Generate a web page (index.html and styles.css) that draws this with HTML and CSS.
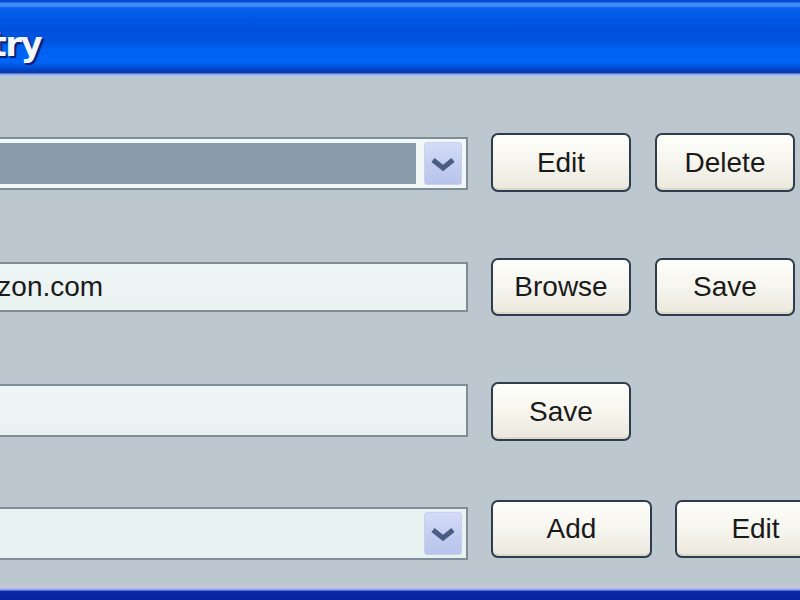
FILE: index.html
```html
<!DOCTYPE html>
<html>
<head>
<meta charset="utf-8">
<title>Entry</title>
<link rel="stylesheet" href="styles.css">
</head>
<body>
<div class="window">
  <div class="titlebar"><span class="title">Entry</span></div>
  <div class="content">
    <div class="row row1">
      <div class="combo selected-combo">
        <div class="combo-value"></div>
        <div class="drop"><svg width="26" height="16" viewBox="0 0 26 16"><polyline points="3,4 13,12 23,4" fill="none" stroke="#4a5e84" stroke-width="5" stroke-linejoin="miter"/></svg></div>
      </div>
      <button class="btn w139">Edit</button>
      <button class="btn w139">Delete</button>
    </div>
    <div class="row row2">
      <div class="field"><span class="field-text">www.amazon.com</span></div>
      <button class="btn w139">Browse</button>
      <button class="btn w139">Save</button>
    </div>
    <div class="row row3">
      <div class="field"></div>
      <button class="btn w139">Save</button>
    </div>
    <div class="row row4">
      <div class="combo">
        <div class="combo-value plain"></div>
        <div class="drop"><svg width="26" height="16" viewBox="0 0 26 16"><polyline points="3,4 13,12 23,4" fill="none" stroke="#4a5e84" stroke-width="5" stroke-linejoin="miter"/></svg></div>
      </div>
      <button class="btn w161">Add</button>
      <button class="btn w161">Edit</button>
    </div>
  </div>
  <div class="frame-bottom"></div>
</div>
</body>
</html>
```

FILE: styles.css
```css
html, body {
  margin: 0;
  padding: 0;
  width: 800px;
  height: 600px;
  overflow: hidden;
  background: #bcc7d0;
}

.window {
  margin-left: -140px;
  width: 940px;
  height: 600px;
  display: flex;
  flex-direction: column;
  background: #bcc7d0;
  font-family: "Liberation Sans", Arial, sans-serif;
}

.titlebar {
  height: 76px;
  flex: none;
  box-sizing: border-box;
  padding-left: 86px;
  padding-top: 24px;
  background: linear-gradient(to bottom,
    #0a4cd0 0px, #0a4cd0 2px,
    #3b8cf6 3px, #4090f8 6px,
    #0a60ec 8px, #0058e6 18px,
    #0052dc 30px, #0054e0 42px,
    #0062f4 50px, #0064f6 62px,
    #0052da 67px, #003cb8 71px,
    #1a3a9c 73px, #8aaef2 74px, #a8c0f0 76px);
}

.title {
  font-family: "DejaVu Sans", Verdana, sans-serif;
  font-weight: bold;
  font-size: 34px;
  line-height: 40px;
  color: #f4f6ff;
  text-shadow: 2px 2px 1px #0a1f70;
  letter-spacing: -1.5px;
}

.content {
  flex: 1;
  padding-left: 8px;
  padding-top: 57px;
  box-sizing: border-box;
}

.row {
  display: flex;
  align-items: flex-start;
}

.row1 { height: 59px; }
.row2 { height: 58px; margin-top: 66px; }
.row3 { height: 59px; margin-top: 66px; }
.row4 { height: 60px; margin-top: 59px; }

.combo, .field {
  width: 600px;
  flex: none;
  box-sizing: border-box;
  border: 2px solid #7f8d98;
  background: #eaf3f1;
  margin-right: 23px;
}

.row1 .combo { height: 53px; margin-top: 4px; }
.row2 .field { height: 50px; margin-top: 4px; }
.row3 .field { height: 53px; margin-top: 2px; }
.row4 .combo { height: 53px; margin-top: 7px; }

.combo {
  display: flex;
  align-items: stretch;
  padding: 4px 4px 4px 4px;
  background: #f0f7f6;
}

.combo-value {
  flex: 1;
  background: #8a9dab;
  margin-right: 8px;
}

.combo-value.plain {
  background: transparent;
}

.row4 .combo {
  background: #e8f2f0;
}

.drop {
  width: 36px;
  flex: none;
  border-radius: 3px;
  background: linear-gradient(to bottom, #d4dcf6, #c2ccef 60%, #b8c4ec);
  border: 1px solid #c8d0ee;
  display: flex;
  align-items: center;
  justify-content: center;
  margin: -1px 0;
}

.field {
  display: flex;
  align-items: center;
  padding-left: 6px;
  background: linear-gradient(to bottom, #eef6f6, #e8f2ef);
}

.field-text {
  font-size: 28px;
  color: #1a1a1a;
  white-space: nowrap;
}

.btn {
  flex: none;
  box-sizing: border-box;
  height: 59px;
  border: 2px solid #2e3d4c;
  border-radius: 7px;
  background: linear-gradient(to bottom, #fefefb 0%, #f6f5ee 50%, #ebe8dc 100%);
  box-shadow: inset 0 -2px 0 #dcd8c8;
  font-family: "Liberation Sans", Arial, sans-serif;
  font-size: 28px;
  color: #1a1a1a;
  padding: 0;
  margin: 0 24px 0 0;
}

.row2 .btn { height: 58px; }
.row4 .btn { height: 58px; }

.w139 { width: 140px; }
.w161 { width: 161px; margin-right: 23px; }

.frame-bottom {
  height: 14px;
  flex: none;
  background: linear-gradient(to bottom,
    #c9c6d8 0px, #c9c6d8 2px,
    #8eaaf0 3px, #8eaaf0 4px,
    #0a2aa6 5px, #0a24a0 14px);
}
```
